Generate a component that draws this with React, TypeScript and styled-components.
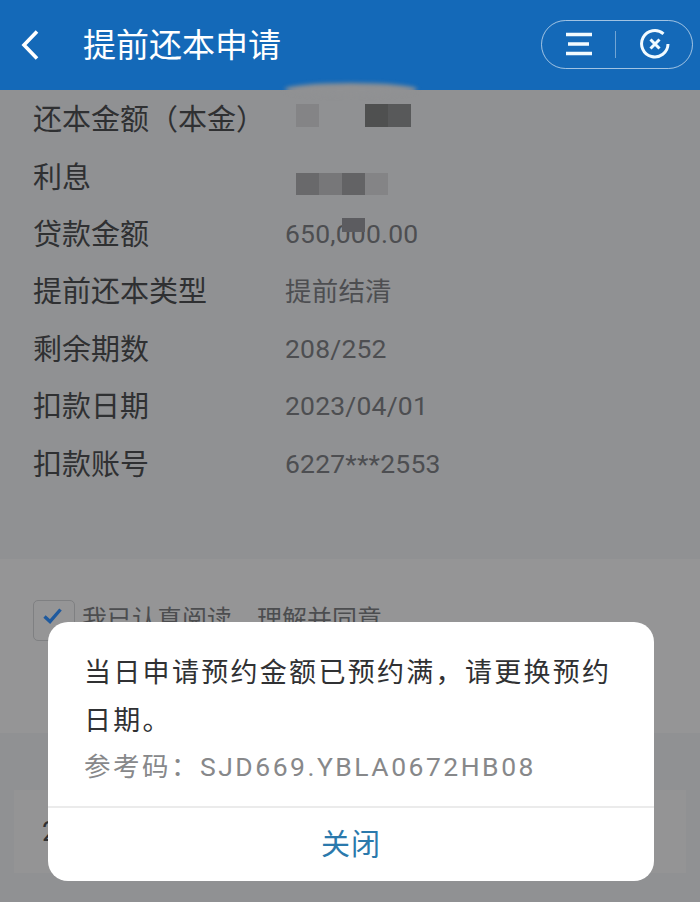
import React from "react";
import styled, { createGlobalStyle } from "styled-components";

const Global = createGlobalStyle`
  html, body { margin: 0; padding: 0; background: #909193; }
  * { box-sizing: border-box; }
`;

const FONT = `Roboto, "Noto Sans CJK SC", sans-serif`;

const Page = styled.div`
  position: relative;
  width: 700px;
  height: 902px;
  overflow: hidden;
  background: #909193;
  font-family: ${FONT};
  display: flex;
  flex-direction: column;
`;

const Header = styled.header`
  position: relative;
  flex: 0 0 90px;
  display: flex;
  align-items: center;
  background: #1469b8;
  padding: 0 7px 0 20px;
  &::after {
    content: "";
    position: absolute;
    left: 285px;
    bottom: -6px;
    width: 132px;
    height: 13px;
    border-radius: 50%;
    background: #909193;
    filter: blur(2px);
  }
`;

const BackButton = styled.button`
  display: flex;
  width: 20px;
  height: 32px;
  padding: 0;
  border: 0;
  background: none;
  margin-right: 43px;
`;

const Title = styled.h1`
  flex: 1;
  margin: 0;
  color: #fff;
  font-size: 33px;
  font-weight: 400;
  line-height: 1;
`;

const Capsule = styled.div`
  width: 152px;
  height: 49px;
  margin-top: -2px;
  display: flex;
  align-items: center;
  border: 1.5px solid rgba(255, 255, 255, 0.6);
  border-radius: 25px;
  padding-left: 23px;
`;

const CapsuleDivider = styled.span`
  width: 1px;
  height: 27px;
  margin: 0 23px 0 22px;
  background: rgba(255, 255, 255, 0.4);
`;

const Details = styled.section`
  position: relative;
  flex: 0 0 469px;
  padding: 1px 33px 0;
  display: flex;
  flex-direction: column;
`;

const Row = styled.div`
  display: grid;
  grid-template-columns: 252px 1fr;
  align-items: center;
  height: 57.4px;
`;

const Label = styled.span`
  font-size: 29px;
  color: #2f3032;
  white-space: nowrap;
  line-height: 1;
  padding-top: 2px;
`;

const Value = styled.span`
  font-size: 26.5px;
  letter-spacing: 0.2px;
  color: #4d4e51;
  white-space: nowrap;
  line-height: 1;
`;

const Mosaic = styled.div<{ $left: number; $top: number }>`
  position: absolute;
  left: ${(p) => p.$left}px;
  top: ${(p) => p.$top}px;
  display: flex;
`;

const Pixel = styled.span<{ $c: string; $h: number }>`
  width: 23px;
  height: ${(p) => p.$h}px;
  background: ${(p) => p.$c};
`;

const Agreement = styled.section`
  flex: 0 0 174px;
  background: #959596;
  padding: 41px 0 0 33px;
  display: flex;
  align-items: flex-start;
  gap: 7px;
`;

const Checkbox = styled.span`
  width: 42px;
  height: 41px;
  display: flex;
  justify-content: center;
  padding: 7px 3px 0 0;
  border: 1.5px solid #7f8082;
  border-radius: 5px;
`;

const AgreementText = styled.span`
  font-size: 25px;
  line-height: 1;
  margin-top: 7px;
  color: #4c4d4f;
`;

const Footer = styled.section`
  flex: 1;
  padding: 57px 14px 0;
`;

const FooterCard = styled.div`
  height: 83px;
  background: #949495;
  display: flex;
  align-items: center;
  padding-left: 28px;
  font-size: 27px;
  color: #2f3032;
`;

const Modal = styled.div`
  position: absolute;
  left: 48px;
  top: 622px;
  width: 606px;
  height: 259px;
  background: #fff;
  border-radius: 20px;
  display: flex;
  flex-direction: column;
`;

const ModalBody = styled.div`
  flex: 0 0 184px;
  padding: 27px 36px 0 36px;
`;

const Message = styled.p`
  margin: 0;
  font-size: 27px;
  letter-spacing: 2.3px;
  line-height: 48px;
  color: #303133;
`;

const RefCode = styled.p`
  margin: 0;
  font-size: 26.5px;
  letter-spacing: 2.5px;
  line-height: 44px;
  color: #87888a;
  white-space: nowrap;
`;

const CloseAction = styled.button`
  flex: 1;
  border: 0;
  border-top: 2px solid #ebebeb;
  background: none;
  padding: 0 0 6px;
  font-family: ${FONT};
  font-size: 29px;
  letter-spacing: 1px;
  color: #2b79ac;
`;

const rows: [string, string][] = [
  ["还本金额（本金）", ""],
  ["利息", ""],
  ["贷款金额", "650,000.00"],
  ["提前还本类型", "提前结清"],
  ["剩余期数", "208/252"],
  ["扣款日期", "2023/04/01"],
  ["扣款账号", "6227***2553"],
];

export default function App() {
  return (
    <Page>
      <Global />
      <Header>
        <BackButton aria-label="返回">
          <svg width="20" height="32" viewBox="0 0 20 32" fill="none">
            <path d="M17 2.5 4 16l13 13.5" stroke="#fff" strokeWidth="3.6" />
          </svg>
        </BackButton>
        <Title>提前还本申请</Title>
        <Capsule>
          <svg width="28" height="24" viewBox="0 0 28 24" fill="none">
            <path d="M1 2.5h26M3 12h21M1 21.5h26" stroke="#f2fbff" strokeWidth="3.6" />
          </svg>
          <CapsuleDivider />
          <svg width="32" height="32" viewBox="0 0 32 32" fill="none">
            <path d="M24.5 5.8A13.2 13.2 0 1 0 29 16" stroke="#f2fbff" strokeWidth="3" />
            <path d="M11.5 11.5l9 9M20.5 11.5l-9 9" stroke="#f2fbff" strokeWidth="3" />
          </svg>
        </Capsule>
      </Header>
      <Details>
        {rows.map(([label, value]) => (
          <Row key={label}>
            <Label>{label}</Label>
            <Value>{value}</Value>
          </Row>
        ))}
        <Mosaic $left={296} $top={14}>
          <Pixel $c="#848486" $h={23} />
          <Pixel $c="#909193" $h={23} />
          <Pixel $c="#909193" $h={23} />
          <Pixel $c="#4f5050" $h={23} />
          <Pixel $c="#58595a" $h={23} />
        </Mosaic>
        <Mosaic $left={296} $top={83}>
          <Pixel $c="#69696b" $h={22} />
          <Pixel $c="#777779" $h={22} />
          <Pixel $c="#636365" $h={22} />
          <Pixel $c="#848486" $h={22} />
        </Mosaic>
        <Mosaic $left={342} $top={128}>
          <Pixel $c="#5c5c60" $h={14} />
        </Mosaic>
      </Details>
      <Agreement>
        <Checkbox>
          <svg width="19" height="16" viewBox="0 0 19 16" fill="none">
            <path d="M1.5 8.5l5.5 5L17.5 1.5" stroke="#1f5a9e" strokeWidth="3.4" />
          </svg>
        </Checkbox>
        <AgreementText>我已认真阅读，理解并同意</AgreementText>
      </Agreement>
      <Footer>
        <FooterCard>2</FooterCard>
      </Footer>
      <Modal role="dialog">
        <ModalBody>
          <Message>当日申请预约金额已预约满，请更换预约日期。</Message>
          <RefCode>参考码：SJD669.YBLA0672HB08</RefCode>
        </ModalBody>
        <CloseAction>关闭</CloseAction>
      </Modal>
    </Page>
  );
}
